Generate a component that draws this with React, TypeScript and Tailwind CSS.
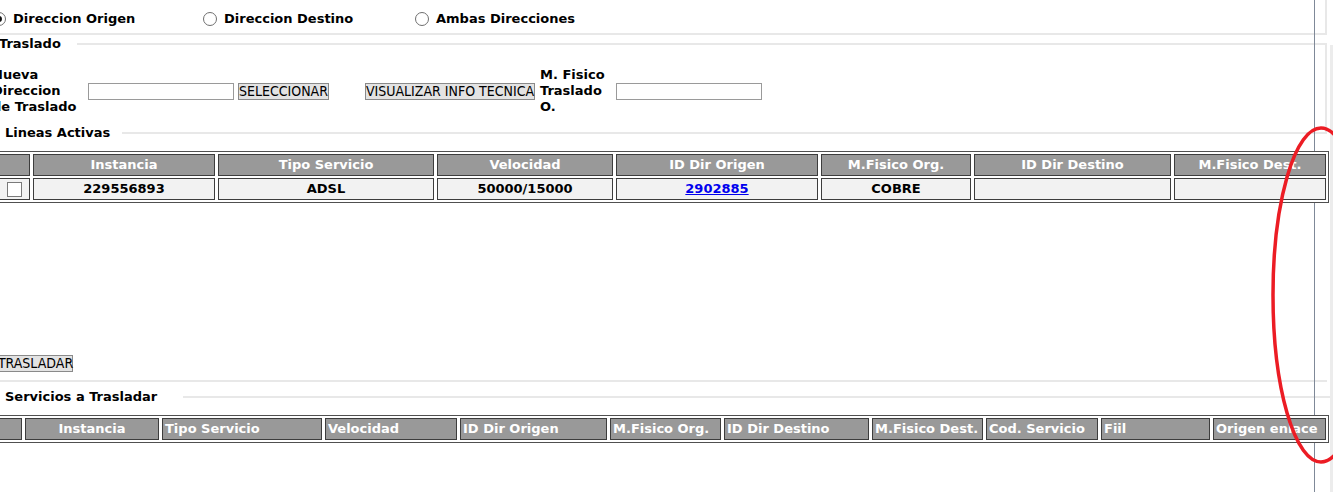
import React from "react";

const F = "font-['DejaVu_Sans',sans-serif]";
const FC = "font-['DejaVu_Sans_Condensed','DejaVu_Sans',sans-serif] [font-stretch:condensed]";

function Radio({ checked, label }: { checked?: boolean; label: string }) {
  return (
    <div className="flex items-center gap-[7px]">
      <span className="w-[14px] h-[14px] rounded-full border border-[#6f6f6f] bg-white flex items-center justify-center">
        {checked && <span className="w-[6px] h-[6px] rounded-full bg-[#111]" />}
      </span>
      <span className="text-[13px] font-bold text-black leading-[16px]">{label}</span>
    </div>
  );
}

function Btn({ children, w }: { children: React.ReactNode; w: string }) {
  return (
    <div
      className={`${w} h-[17px] border border-[#8a8a8a] bg-[#e3e3e3] text-[14px] leading-[15px] text-black font-normal flex items-center justify-center whitespace-nowrap ${FC}`}
    >
      {children}
    </div>
  );
}

const t1 = [
  { h: "", w: "w-[32px]" },
  { h: "Instancia", w: "w-[182px]" },
  { h: "Tipo Servicio", w: "w-[216px]" },
  { h: "Velocidad", w: "w-[176px]" },
  { h: "ID Dir Origen", w: "w-[202px]" },
  { h: "M.Fisico Org.", w: "w-[150px]" },
  { h: "ID Dir Destino", w: "w-[197px]" },
  { h: "M.Fisico Dest.", w: "w-[152px]" },
];

const t2 = [
  { h: "", w: "w-[24px]", c: true },
  { h: "Instancia", w: "w-[134px]", c: true },
  { h: "Tipo Servicio", w: "w-[160px]" },
  { h: "Velocidad", w: "w-[132px]" },
  { h: "ID Dir Origen", w: "w-[147px]" },
  { h: "M.Fisico Org.", w: "w-[111px]" },
  { h: "ID Dir Destino", w: "w-[145px]" },
  { h: "M.Fisico Dest.", w: "w-[111px]" },
  { h: "Cod. Servicio", w: "w-[112px]" },
  { h: "Fiil", w: "w-[109px]" },
  { h: "Origen enlace", w: "w-[113px]" },
];

const HCell = "h-[22px] border border-[#3d3d3d] bg-[#999999] text-white text-[13px] font-bold leading-[20px] whitespace-nowrap overflow-hidden";
const DCell = "h-[22px] border border-[#3d3d3d] bg-[#f2f2f2] text-black text-[13px] font-bold leading-[20px] whitespace-nowrap overflow-hidden flex items-center justify-center";
const Legend = "relative -mt-[9px] flex w-fit bg-white h-[16px] text-[13px] font-bold leading-[16px] text-black whitespace-nowrap";

export default function App() {
  return (
    <div className={`relative w-[1333px] h-[492px] overflow-hidden bg-white ${F}`}>
      {/* vertical frame line */}
      <div className="absolute left-[1314px] top-0 w-px h-full bg-[#7f8998]" />
      <div className="absolute left-[1330px] top-[45px] bottom-0 w-[3px] bg-[#ececec]" />

      <div className="ml-[-10px] w-[1343px]">
        {/* radios */}
        <div className="w-[1337px] h-[35px] pt-[5px] border-b-2 border-r-2 border-[#e8e8e8] flex items-center">
          <div className="grid grid-cols-[211px_212px_212px] ml-[2px]">
            <Radio checked label="Direccion Origen" />
            <Radio label="Direccion Destino" />
            <Radio label="Ambas Direcciones" />
          </div>
        </div>

        {/* Traslado */}
        <div className="w-[1337px] mt-[8px] border-t-2 border-r-2 border-[#e8e8e8] h-[89px]">
          <div className={`${Legend} pl-[9px] pr-[16px]`}>Traslado</div>
          <div className="flex items-center mt-[15px] text-[13px] font-bold text-black">
            <div className="ml-[2px] w-[96px] leading-[16px] whitespace-nowrap">
              Nueva
              <br />
              Direccion
              <br />
              de Traslado
            </div>
            <div className="w-[146px] h-[17px] border border-[#9a9a9a] bg-white" />
            <div className="ml-[4px]">
              <Btn w="w-[91px]">SELECCIONAR</Btn>
            </div>
            <div className="ml-[36px]">
              <Btn w="w-[170px]">VISUALIZAR INFO TECNICA</Btn>
            </div>
            <div className="ml-[5px] w-[76px] leading-[16px] whitespace-nowrap">
              M. Fisico
              <br />
              Traslado
              <br />
              O.
            </div>
            <div className="w-[146px] h-[17px] border border-[#9a9a9a] bg-white" />
          </div>
        </div>

        {/* Lineas Activas */}
        <div className="w-[1337px] border-t-2 border-b-2 border-[#e8e8e8] h-[250px]">
          <div className={`${Legend} pl-[15px] pr-[12px]`}>Lineas Activas</div>
          <div className="relative ml-[5px] mt-[10px] w-fit bg-white border border-[#505050] p-[2px] flex flex-col gap-[2px]">
            <div className="flex gap-[3px]">
              {t1.map((c, i) => (
                <div key={i} className={`${c.w} ${HCell} text-center`}>
                  {c.h}
                </div>
              ))}
            </div>
            <div className="flex gap-[3px]">
              <div className={`${t1[0].w} ${DCell}`}>
                <span className="w-[15px] h-[15px] border border-[#7a7a7a] bg-white" />
              </div>
              <div className={`${t1[1].w} ${DCell}`}>229556893</div>
              <div className={`${t1[2].w} ${DCell}`}>ADSL</div>
              <div className={`${t1[3].w} ${DCell}`}>50000/15000</div>
              <div className={`${t1[4].w} ${DCell}`}>
                <a className="text-[#0000ee] underline" href="#">
                  2902885
                </a>
              </div>
              <div className={`${t1[5].w} ${DCell}`}>COBRE</div>
              <div className={`${t1[6].w} ${DCell}`}></div>
              <div className={`${t1[7].w} ${DCell}`}></div>
            </div>
          </div>
          <div className="ml-[8px] mt-[152px] w-fit">
            <Btn w="w-[75px]">TRASLADAR</Btn>
          </div>
        </div>

        {/* Servicios a Trasladar */}
        <div className="w-[1343px] mt-[14px] border-t-2 border-[#e8e8e8]">
          <div className={`${Legend} pl-[15px] pr-[26px]`}>Servicios a Trasladar</div>
          <div className="relative ml-[5px] mt-[10px] w-fit bg-white border border-[#505050] p-[2px] flex">
            <div className="flex gap-[3px]">
              {t2.map((c, i) => (
                <div key={i} className={`${c.w} ${HCell} ${c.c ? "text-center" : "text-left pl-[2px]"}`}>
                  {c.h}
                </div>
              ))}
            </div>
          </div>
        </div>
      </div>

      {/* red annotation ellipse */}
      <svg className="absolute left-[1262px] top-[120px]" width="90" height="360" viewBox="0 0 90 360">
        <ellipse cx="59" cy="175" rx="48" ry="167" fill="none" stroke="#ec1c24" strokeWidth="3.5" />
      </svg>
    </div>
  );
}
